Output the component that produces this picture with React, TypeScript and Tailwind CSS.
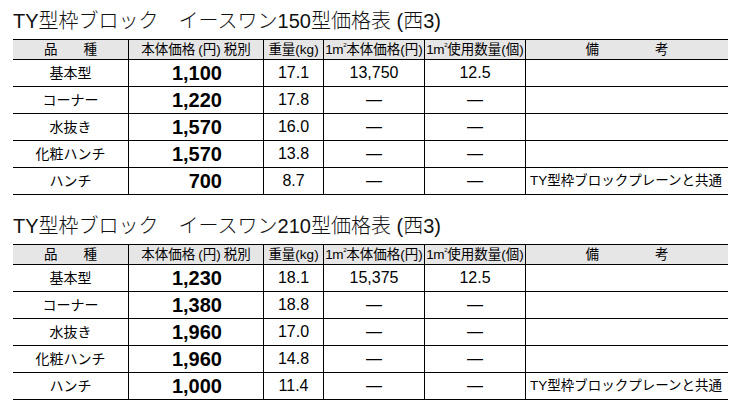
import React from "react";

type Row = [string, string, string, string, string, string];

const rows1: Row[] = [
  ["基本型", "1,100", "17.1", "13,750", "12.5", ""],
  ["コーナー", "1,220", "17.8", "—", "—", ""],
  ["水抜き", "1,570", "16.0", "—", "—", ""],
  ["化粧ハンチ", "1,570", "13.8", "—", "—", ""],
  ["ハンチ", "700", "8.7", "—", "—", "TY型枠ブロックプレーンと共通"],
];

const rows2: Row[] = [
  ["基本型", "1,230", "18.1", "15,375", "12.5", ""],
  ["コーナー", "1,380", "18.8", "—", "—", ""],
  ["水抜き", "1,960", "17.0", "—", "—", ""],
  ["化粧ハンチ", "1,960", "14.8", "—", "—", ""],
  ["ハンチ", "1,000", "11.4", "—", "—", "TY型枠ブロックプレーンと共通"],
];

function M2() {
  return (
    <span className="tracking-[-0.3px]">
      1m<sup className="text-[6px] top-[-1.1em]">2</sup>
    </span>
  );
}

function Section({ title, rows, className }: { title: string; rows: Row[]; className?: string }) {
  const cols = "grid grid-cols-[115px_135px_60px_101px_101px_203px]";
  return (
    <div className={className}>
      <h2 className="h-[26px] leading-[26px] text-[20px] font-light mb-[5px] whitespace-pre text-[#111]">
        {title}
      </h2>
      <div className="w-[715px] border-t border-b border-black">
        <div className={`${cols} h-[19px] bg-[#e6e6e6] text-[13.5px] leading-none`}>
          <div className="flex items-center justify-center gap-[26px]">
            <span>品</span>
            <span>種</span>
          </div>
          <div className="flex items-center justify-center border-l border-black whitespace-nowrap">
            本体価格<span className="mx-[3px]">(円)</span>税別
          </div>
          <div className="flex items-center justify-center border-l border-black">重量(kg)</div>
          <div className="flex items-center justify-center border-l border-black whitespace-nowrap">
            <M2 />本体価格(円)
          </div>
          <div className="flex items-center justify-center border-l border-black whitespace-nowrap">
            <M2 />使用数量(個)
          </div>
          <div className="flex items-center justify-center gap-[56px] border-l border-black">
            <span>備</span>
            <span>考</span>
          </div>
        </div>
        {rows.map((r, i) => (
          <div key={i} className={`${cols} h-[27px] border-t border-black leading-none`}>
            <div className="flex items-center justify-center text-[14px]">{r[0]}</div>
            <div className="flex items-center justify-end pr-[41px] border-l border-black text-[20px] font-bold">
              {r[1]}
            </div>
            <div className="flex items-center justify-center border-l border-black text-[16px]">{r[2]}</div>
            <div className="flex items-center justify-center border-l border-black text-[16px]">{r[3]}</div>
            <div className="flex items-center justify-center border-l border-black text-[16px]">{r[4]}</div>
            <div className="flex items-center pl-[4px] border-l border-black text-[13.5px] whitespace-nowrap">
              {r[5]}
            </div>
          </div>
        ))}
      </div>
    </div>
  );
}

export default function App() {
  return (
    <div className="w-[742px] h-[413px] bg-white pl-[13px] pt-[8px] overflow-hidden text-black font-['Liberation_Sans','Noto_Sans_CJK_JP',sans-serif]">
      <Section title="TY型枠ブロック　イースワン150型価格表 (西3)" rows={rows1} />
      <Section title="TY型枠ブロック　イースワン210型価格表 (西3)" rows={rows2} className="mt-[18px]" />
    </div>
  );
}
